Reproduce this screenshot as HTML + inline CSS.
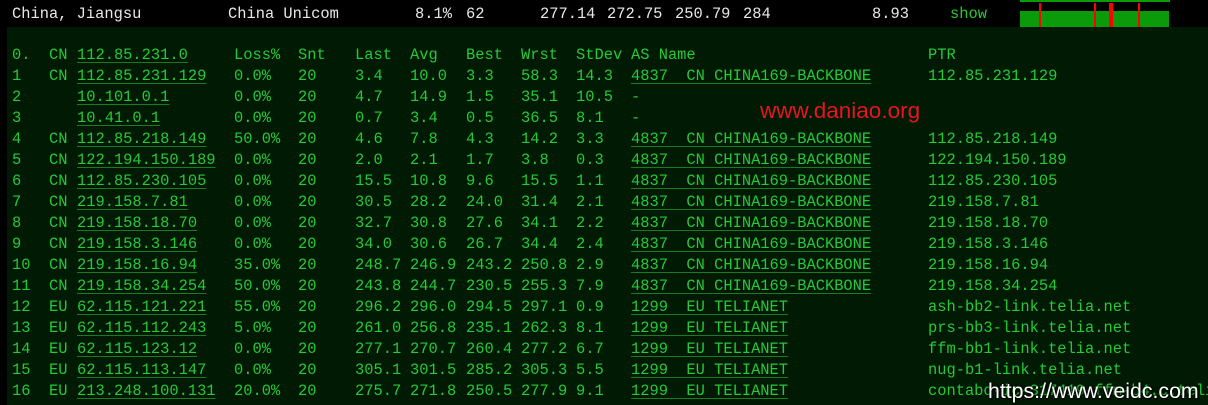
<!DOCTYPE html>
<html><head><meta charset="utf-8"><style>
body{margin:0;width:1208px;height:405px;background:#000;overflow:hidden;position:relative;font-family:"Liberation Mono",monospace;font-size:15.4px}
.top{position:absolute;left:0;top:0;width:1208px;height:27px;background:#000;color:#e8e8e8}
.panel{position:absolute;left:7px;top:27px;width:1201px;height:378px;background:#001a04}
span{position:absolute;white-space:pre;line-height:21px}
.r{position:absolute;left:0;height:21px;width:1208px;color:#26c936}
.u{text-decoration:underline;text-decoration-color:#1a7a22;text-underline-offset:3px}
</style></head><body>
<div class="top">
<span style="left:12px;top:4px">China, Jiangsu</span>
<span style="left:228px;top:4px">China Unicom</span>
<span style="left:415px;top:4px">8.1%</span>
<span style="left:466px;top:4px">62</span>
<span style="left:540px;top:4px">277.14</span>
<span style="left:607px;top:4px">272.75</span>
<span style="left:675px;top:4px">250.79</span>
<span style="left:743px;top:4px">284</span>
<span style="left:872px;top:4px">8.93</span>
<span style="left:950px;top:4px;color:#26c936">show</span>
<div style="position:absolute;left:1020px;top:0;width:150px;height:2px;background:#0a9a0a"></div>
<div style="position:absolute;left:1020px;top:11px;width:149px;height:16px;background:#0a9a0a"></div>
<div style="position:absolute;left:1039px;top:3px;width:2px;height:24px;background:#f00"></div>
<div style="position:absolute;left:1094px;top:3px;width:2px;height:24px;background:#f00"></div>
<div style="position:absolute;left:1109px;top:3px;width:4px;height:24px;background:#f00"></div>
<div style="position:absolute;left:1138px;top:3px;width:2px;height:24px;background:#f00"></div>
</div>
<div class="panel"></div>

<div class="r" style="top:45px"><span style="left:12px">0.</span><span style="left:49px">CN</span><span class="u" style="left:77px">112.85.231.0</span><span style="left:234px">Loss%</span><span style="left:298px">Snt</span><span style="left:355px">Last</span><span style="left:410px">Avg</span><span style="left:466px">Best</span><span style="left:521px">Wrst</span><span style="left:576px">StDev</span><span style="left:631px">AS Name</span><span style="left:928px">PTR</span></div>

<div class="r" style="top:66px"><span style="left:12px">1</span><span style="left:49px">CN</span><span class="u" style="left:77px">112.85.231.129</span><span style="left:234px">0.0%</span><span style="left:298px">20</span><span style="left:355px">3.4</span><span style="left:410px">10.0</span><span style="left:466px">3.3</span><span style="left:521px">58.3</span><span style="left:576px">14.3</span><span class="u" style="left:631px">4837  CN CHINA169-BACKBONE</span><span style="left:928px">112.85.231.129</span></div>

<div class="r" style="top:87px"><span style="left:12px">2</span><span class="u" style="left:77px">10.101.0.1</span><span style="left:234px">0.0%</span><span style="left:298px">20</span><span style="left:355px">4.7</span><span style="left:410px">14.9</span><span style="left:466px">1.5</span><span style="left:521px">35.1</span><span style="left:576px">10.5</span><span style="left:631px">-</span></div>

<div class="r" style="top:108px"><span style="left:12px">3</span><span class="u" style="left:77px">10.41.0.1</span><span style="left:234px">0.0%</span><span style="left:298px">20</span><span style="left:355px">0.7</span><span style="left:410px">3.4</span><span style="left:466px">0.5</span><span style="left:521px">36.5</span><span style="left:576px">8.1</span><span style="left:631px">-</span></div>

<div class="r" style="top:129px"><span style="left:12px">4</span><span style="left:49px">CN</span><span class="u" style="left:77px">112.85.218.149</span><span style="left:234px">50.0%</span><span style="left:298px">20</span><span style="left:355px">4.6</span><span style="left:410px">7.8</span><span style="left:466px">4.3</span><span style="left:521px">14.2</span><span style="left:576px">3.3</span><span class="u" style="left:631px">4837  CN CHINA169-BACKBONE</span><span style="left:928px">112.85.218.149</span></div>

<div class="r" style="top:150px"><span style="left:12px">5</span><span style="left:49px">CN</span><span class="u" style="left:77px">122.194.150.189</span><span style="left:234px">0.0%</span><span style="left:298px">20</span><span style="left:355px">2.0</span><span style="left:410px">2.1</span><span style="left:466px">1.7</span><span style="left:521px">3.8</span><span style="left:576px">0.3</span><span class="u" style="left:631px">4837  CN CHINA169-BACKBONE</span><span style="left:928px">122.194.150.189</span></div>

<div class="r" style="top:171px"><span style="left:12px">6</span><span style="left:49px">CN</span><span class="u" style="left:77px">112.85.230.105</span><span style="left:234px">0.0%</span><span style="left:298px">20</span><span style="left:355px">15.5</span><span style="left:410px">10.8</span><span style="left:466px">9.6</span><span style="left:521px">15.5</span><span style="left:576px">1.1</span><span class="u" style="left:631px">4837  CN CHINA169-BACKBONE</span><span style="left:928px">112.85.230.105</span></div>

<div class="r" style="top:192px"><span style="left:12px">7</span><span style="left:49px">CN</span><span class="u" style="left:77px">219.158.7.81</span><span style="left:234px">0.0%</span><span style="left:298px">20</span><span style="left:355px">30.5</span><span style="left:410px">28.2</span><span style="left:466px">24.0</span><span style="left:521px">31.4</span><span style="left:576px">2.1</span><span class="u" style="left:631px">4837  CN CHINA169-BACKBONE</span><span style="left:928px">219.158.7.81</span></div>

<div class="r" style="top:213px"><span style="left:12px">8</span><span style="left:49px">CN</span><span class="u" style="left:77px">219.158.18.70</span><span style="left:234px">0.0%</span><span style="left:298px">20</span><span style="left:355px">32.7</span><span style="left:410px">30.8</span><span style="left:466px">27.6</span><span style="left:521px">34.1</span><span style="left:576px">2.2</span><span class="u" style="left:631px">4837  CN CHINA169-BACKBONE</span><span style="left:928px">219.158.18.70</span></div>

<div class="r" style="top:234px"><span style="left:12px">9</span><span style="left:49px">CN</span><span class="u" style="left:77px">219.158.3.146</span><span style="left:234px">0.0%</span><span style="left:298px">20</span><span style="left:355px">34.0</span><span style="left:410px">30.6</span><span style="left:466px">26.7</span><span style="left:521px">34.4</span><span style="left:576px">2.4</span><span class="u" style="left:631px">4837  CN CHINA169-BACKBONE</span><span style="left:928px">219.158.3.146</span></div>

<div class="r" style="top:255px"><span style="left:12px">10</span><span style="left:49px">CN</span><span class="u" style="left:77px">219.158.16.94</span><span style="left:234px">35.0%</span><span style="left:298px">20</span><span style="left:355px">248.7</span><span style="left:410px">246.9</span><span style="left:466px">243.2</span><span style="left:521px">250.8</span><span style="left:576px">2.9</span><span class="u" style="left:631px">4837  CN CHINA169-BACKBONE</span><span style="left:928px">219.158.16.94</span></div>

<div class="r" style="top:276px"><span style="left:12px">11</span><span style="left:49px">CN</span><span class="u" style="left:77px">219.158.34.254</span><span style="left:234px">50.0%</span><span style="left:298px">20</span><span style="left:355px">243.8</span><span style="left:410px">244.7</span><span style="left:466px">230.5</span><span style="left:521px">255.3</span><span style="left:576px">7.9</span><span class="u" style="left:631px">4837  CN CHINA169-BACKBONE</span><span style="left:928px">219.158.34.254</span></div>

<div class="r" style="top:297px"><span style="left:12px">12</span><span style="left:49px">EU</span><span class="u" style="left:77px">62.115.121.221</span><span style="left:234px">55.0%</span><span style="left:298px">20</span><span style="left:355px">296.2</span><span style="left:410px">296.0</span><span style="left:466px">294.5</span><span style="left:521px">297.1</span><span style="left:576px">0.9</span><span class="u" style="left:631px">1299  EU TELIANET</span><span style="left:928px">ash-bb2-link.telia.net</span></div>

<div class="r" style="top:318px"><span style="left:12px">13</span><span style="left:49px">EU</span><span class="u" style="left:77px">62.115.112.243</span><span style="left:234px">5.0%</span><span style="left:298px">20</span><span style="left:355px">261.0</span><span style="left:410px">256.8</span><span style="left:466px">235.1</span><span style="left:521px">262.3</span><span style="left:576px">8.1</span><span class="u" style="left:631px">1299  EU TELIANET</span><span style="left:928px">prs-bb3-link.telia.net</span></div>

<div class="r" style="top:339px"><span style="left:12px">14</span><span style="left:49px">EU</span><span class="u" style="left:77px">62.115.123.12</span><span style="left:234px">0.0%</span><span style="left:298px">20</span><span style="left:355px">277.1</span><span style="left:410px">270.7</span><span style="left:466px">260.4</span><span style="left:521px">277.2</span><span style="left:576px">6.7</span><span class="u" style="left:631px">1299  EU TELIANET</span><span style="left:928px">ffm-bb1-link.telia.net</span></div>

<div class="r" style="top:360px"><span style="left:12px">15</span><span style="left:49px">EU</span><span class="u" style="left:77px">62.115.113.147</span><span style="left:234px">0.0%</span><span style="left:298px">20</span><span style="left:355px">305.1</span><span style="left:410px">301.5</span><span style="left:466px">285.2</span><span style="left:521px">305.3</span><span style="left:576px">5.5</span><span class="u" style="left:631px">1299  EU TELIANET</span><span style="left:928px">nug-b1-link.telia.net</span></div>

<div class="r" style="top:381px"><span style="left:12px">16</span><span style="left:49px">EU</span><span class="u" style="left:77px">213.248.100.131</span><span style="left:234px">20.0%</span><span style="left:298px">20</span><span style="left:355px">275.7</span><span style="left:410px">271.8</span><span style="left:466px">250.5</span><span style="left:521px">277.9</span><span style="left:576px">9.1</span><span class="u" style="left:631px">1299  EU TELIANET</span><span style="left:928px">contabo-ic-317419-ffm-b4.c.telia.net</span></div>

<span style="left:760px;top:97px;font-family:'Liberation Sans',sans-serif;font-size:22.5px;line-height:28px;color:#e8161c">www.daniao.org</span>
<span style="left:988px;top:378px;font-family:'Liberation Sans',sans-serif;font-size:21.3px;line-height:26px;color:#fff;text-shadow:0 0 2px #000,1px 1px 2px #000">https://www.veidc.com</span>
</body></html>
